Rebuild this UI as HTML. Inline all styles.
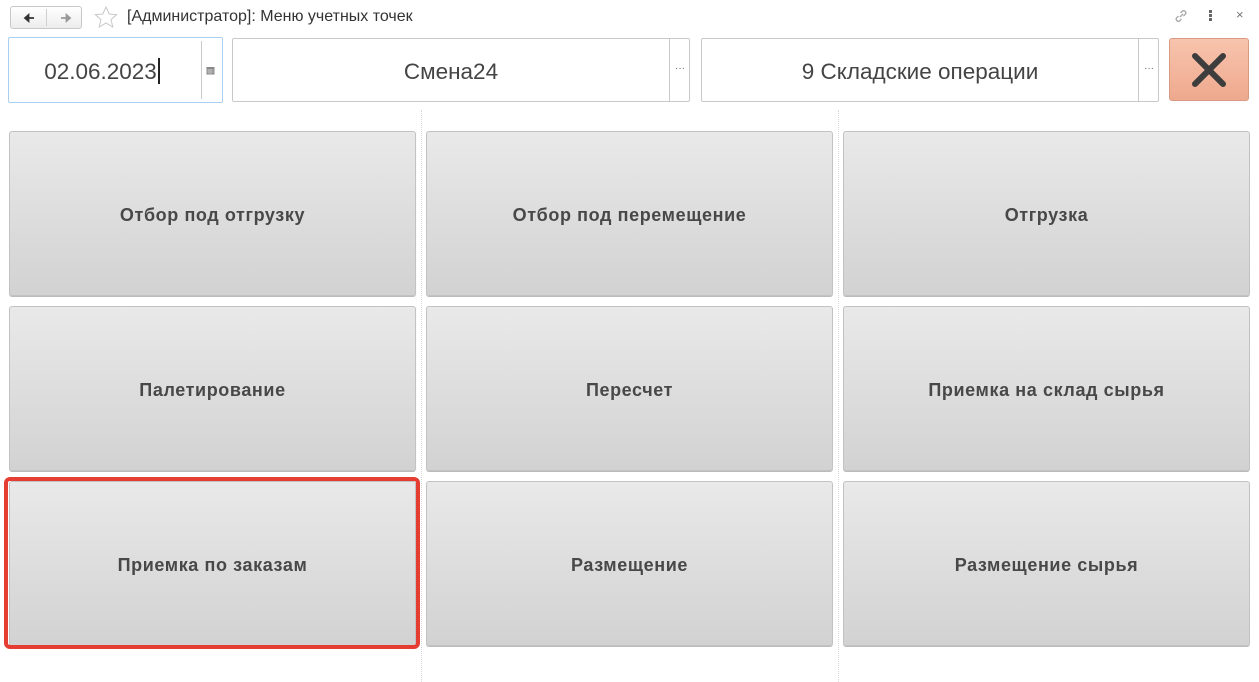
<!DOCTYPE html>
<html><head><meta charset="utf-8"><style>
*{box-sizing:border-box;margin:0;padding:0}
body{width:1259px;height:682px;background:#fff;position:relative;overflow:hidden;font-family:"Liberation Sans","DejaVu Sans",sans-serif}
.a{position:absolute}
.nav{left:10px;top:6px;width:72px;height:23px;border:1px solid #c8c8c8;border-radius:3px;background:linear-gradient(#fff,#ececec)}
.nav:after{content:"";position:absolute;left:35px;top:2px;width:1px;height:17px;background:#d0d0d0}
.title{left:127px;top:8px;font-size:16px;color:#333}
.fld{border:1px solid #c9c9c9;border-radius:2px;background:#fff;height:64px;top:38px}
.fld span{position:absolute;left:0;top:0;height:62px;line-height:66px;text-align:center;font-size:22.5px;color:#444}
.dv{position:absolute;top:0;width:1px;height:62px;background:#c9c9c9}
.dots{position:absolute;top:24px;font-size:10px;color:#666}
.btn{width:407px;height:165px;padding-top:4px;border:1px solid #c2c2c2;border-radius:3px;background:linear-gradient(#e9e9e9,#d2d2d2);display:flex;align-items:center;justify-content:center;font-weight:bold;font-size:18px;letter-spacing:0.6px;color:#484848;box-shadow:0 1px 0 #bbb}
.sep{top:110px;height:572px;width:0;border-left:1px dotted #d8d8d8}
</style></head><body>
<div class="a nav"></div>
<svg class="a" style="left:18px;top:11px" width="60" height="14"><path d="M8 7h8M7 7l3.5-3v6z" stroke="#333" stroke-width="1.8" fill="#333"/><path d="M43 7h8M52 7l-3.5-3v6z" stroke="#999" stroke-width="1.8" fill="#999"/></svg>
<svg class="a" style="left:94px;top:6px" width="24" height="22"><path d="M12 1l3.2 7 7.5.6-5.7 5 1.8 7.4L12 17l-6.8 4 1.8-7.4-5.7-5 7.5-.6z" fill="none" stroke="#c8c8c8" stroke-width="1"/></svg>
<div class="a title">[Администратор]: Меню учетных точек</div>
<svg class="a" style="left:1173px;top:8px" width="16" height="16"><path d="M7 9l3-3M5.5 8l-2 2a2.2 2.2 0 0 0 3 3l2-2M10.5 8l2-2a2.2 2.2 0 0 0-3-3l-2 2" stroke="#aaa" stroke-width="1.4" fill="none"/></svg>
<div class="a" style="left:1209px;top:10px;width:3px;height:3px;background:#666;box-shadow:0 4px #666,0 8px #666"></div>
<div class="a" style="left:1236px;top:7px;font-size:13px;color:#777">×</div>

<div class="a fld" style="left:8px;width:215px;top:37px;height:66px;border-color:#a9d0f0">
<span style="width:186px;top:1px">02.06.2023<b style="display:inline-block;width:2px;height:26px;background:#222;vertical-align:-5px;margin-left:1px"></b></span>
<div class="dv" style="left:192px;top:3px;height:58px"></div>
<svg style="position:absolute;left:197px;top:28px" width="9" height="9"><rect x="0.5" y="1" width="8" height="7.5" fill="#888"/><path d="M1 4h7M1 6h7M3 3v5M5 3v5" stroke="#ddd" stroke-width=".6"/></svg>
</div>
<div class="a fld" style="left:232px;width:458px"><span style="width:436px">Смена24</span><div class="dv" style="left:436px"></div><div class="dots" style="left:442px">···</div></div>
<div class="a fld" style="left:701px;width:458px"><span style="width:436px">9 Складские операции</span><div class="dv" style="left:436px"></div><div class="dots" style="left:442px">···</div></div>
<div class="a" style="left:1169px;top:38px;width:80px;height:63px;border:1px solid #d99a82;border-radius:3px;background:linear-gradient(#f8c4ad,#eea98e)"></div>
<svg class="a" style="left:1189px;top:52px" width="40" height="36"><path d="M6 4l28 28M34 4L6 32" stroke="#3d3d3d" stroke-width="6" stroke-linecap="round"/></svg>

<div class="a sep" style="left:421px"></div>
<div class="a sep" style="left:838px"></div>

<div class="a btn" style="left:9px;top:131px">Отбор под отгрузку</div>
<div class="a btn" style="left:426px;top:131px">Отбор под перемещение</div>
<div class="a btn" style="left:843px;top:131px">Отгрузка</div>
<div class="a btn" style="left:9px;top:306px">Палетирование</div>
<div class="a btn" style="left:426px;top:306px">Пересчет</div>
<div class="a btn" style="left:843px;top:306px">Приемка на склад сырья</div>
<div class="a btn" style="left:9px;top:481px">Приемка по заказам</div>
<div class="a btn" style="left:426px;top:481px">Размещение</div>
<div class="a btn" style="left:843px;top:481px">Размещение сырья</div>
<div class="a" style="left:4px;top:477px;width:416px;height:172px;border:4px solid #e53d31;border-radius:6px"></div>
</body></html>
